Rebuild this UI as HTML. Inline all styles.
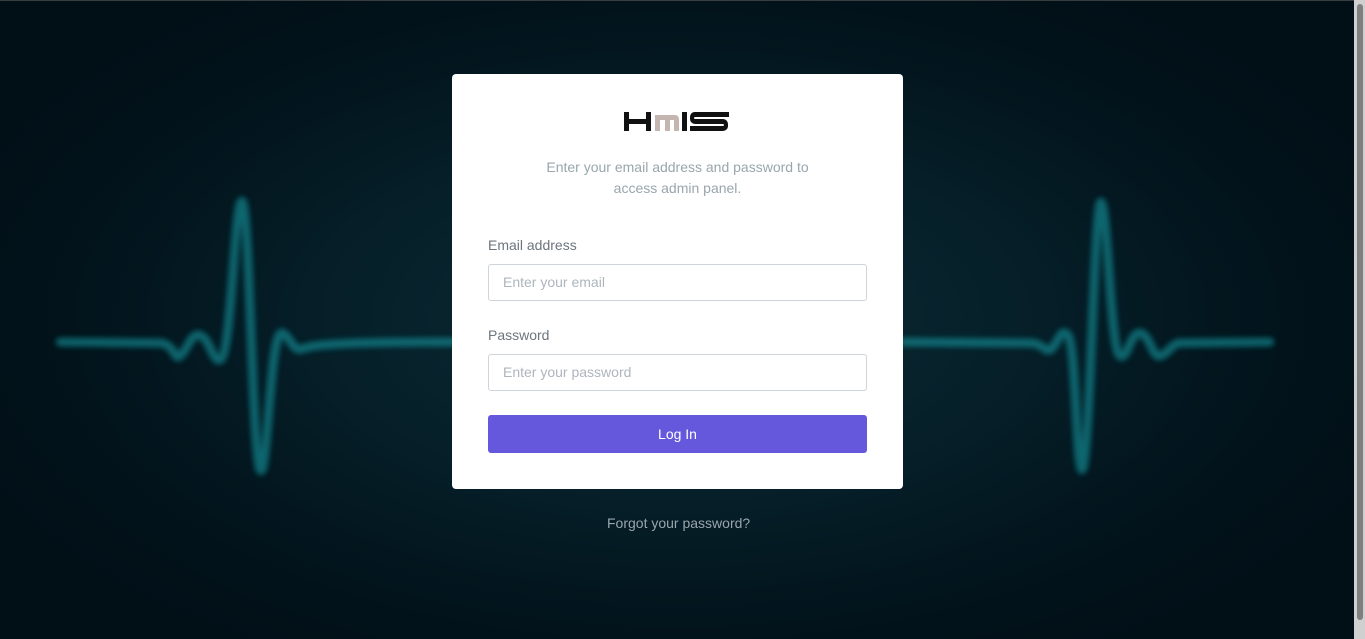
<!DOCTYPE html>
<html><head><meta charset="utf-8"><style>
*{box-sizing:border-box;margin:0;padding:0}
body{width:1365px;height:639px;overflow:hidden;font-family:"Liberation Sans",sans-serif;background:#010f17;position:relative}
.bg{position:absolute;left:0;top:0;width:1354px;height:639px;background:radial-gradient(ellipse 60% 65% at 50% 50%,#0c2b31 0%,#06202a 40%,#02131b 75%,#010f16 100%);border-top:1px solid #3a3d40}
.sb{position:absolute;left:1354px;top:0;width:11px;height:639px;background:#d0d0d0}
.sb i{position:absolute;left:3px;top:4px;width:6px;border-radius:3px;background:#7f7f7f;height:616px}
svg.ecg{position:absolute;left:0;top:0}
.card{position:absolute;left:452px;top:74px;width:451px;height:415px;background:#fff;border-radius:4px}
.logo{position:absolute;left:172px;top:37px}
.sub{position:absolute;top:83px;left:0;width:100%;text-align:center;color:#98a6ad;font-size:14px;line-height:21px}
label{position:absolute;left:36px;font-size:14px;color:#6c757d}
.in{position:absolute;left:36px;width:379px;height:37px;border:1px solid #ced4da;border-radius:3px;padding:0 14px;line-height:35px;font-size:14px;color:#adb5bd}
.btn{position:absolute;left:36px;top:341px;width:379px;height:38px;background:#6658dd;border-radius:3px;color:#fff;text-align:center;line-height:38px;font-size:14px}
.fg{position:absolute;left:607px;top:515px;font-size:14px;color:#98a6ad}
</style></head><body>
<div class="bg"></div>
<svg class="ecg" width="1354" height="639">
<defs><filter id="g" x="-20%" y="-20%" width="140%" height="140%"><feGaussianBlur stdDeviation="3"/></filter></defs>
<g fill="none" stroke-linejoin="round" stroke-linecap="round">
<path id="p" d="M60 342 L160 343 C172 343 175 358 178 357 C186 355 190 333 199 335 C210 337 212 362 220 360 C232 355 234 200 242 201 C250 202 252 472 261 471 C268 470 270 330 282 333 C290 335 292 352 302 349 C310 346 320 342 452 342 M903 342 L1030 343 C1042 343 1045 352 1050 350 C1058 345 1060 326 1068 335 C1076 345 1076 470 1082 470 C1090 468 1094 200 1101 202 C1108 205 1110 350 1120 356 C1128 360 1130 332 1140 333 C1150 334 1152 358 1160 356 C1168 354 1172 343 1180 343 L1270 342" stroke="#17a2aa" stroke-width="8" opacity=".35" filter="url(#g)"/>
<use href="#p" stroke="#2aa5ab" stroke-width="3" opacity=".95"/>
</g></svg>
<div class="sb"><i></i></div>
<div class="card">
<svg class="logo" width="106" height="22" viewBox="0 0 106 22">
<path d="M0 1h5v7h17V1h5v19h-5v-7H5v7H0z" fill="#111"/>
<path d="M31 4h20a4 4 0 0 1 4 4v12h-5V9h-4v11h-5V9h-5v11h-5z" fill="#c4b5b0"/>
<rect x="58" y="1" width="5" height="19" fill="#111"/>
<path d="M70 1h35v5H71a1 1 0 0 0 0 2h28a5 5 0 0 1 5 5v2a5 5 0 0 1-5 5H66v-5h33a1 1 0 0 0 0-2H71a5 5 0 0 1-5-5v-2a5 5 0 0 1 4-5z" fill="#111"/>
</svg>
<div class="sub">Enter your email address and password to<br>access admin panel.</div>
<label style="top:163px">Email address</label>
<div class="in" style="top:190px">Enter your email</div>
<label style="top:253px">Password</label>
<div class="in" style="top:280px">Enter your password</div>
<div class="btn">Log In</div>
</div>
<div class="fg">Forgot your password?</div>
</body></html>
